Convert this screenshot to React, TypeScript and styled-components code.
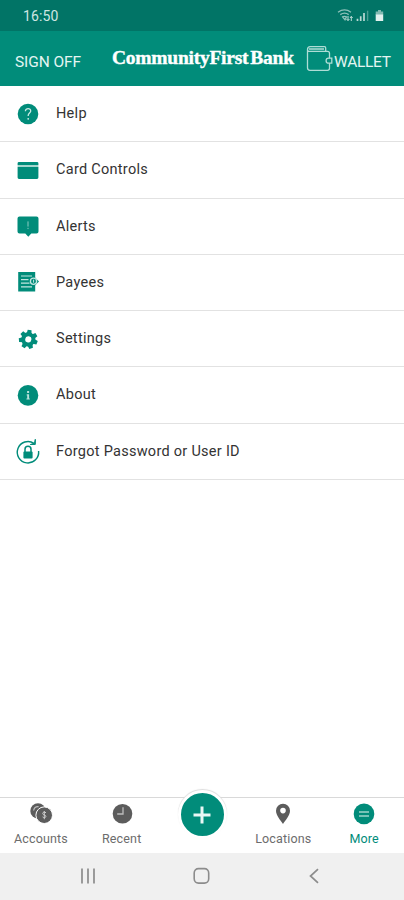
import React from "react";
import styled, { createGlobalStyle } from "styled-components";

const green = "#018c7a";

const GlobalStyle = createGlobalStyle`
  * { box-sizing: border-box; }
  body { margin: 0; background: #fff; font-family: Roboto, sans-serif; }
  svg { display: block; flex: none; overflow: visible; }
`;

const Screen = styled.div`
  width: 404px;
  height: 900px;
  display: flex;
  flex-direction: column;
  background: #fff;
  overflow: hidden;
`;

const StatusBar = styled.div`
  height: 31px;
  flex: none;
  display: flex;
  align-items: center;
  justify-content: space-between;
  padding: 1px 18px 0 23px;
  background: #017466;
  color: #cfe6e2;
  font-size: 14px;
  letter-spacing: 0.1px;
`;

const Header = styled.header`
  height: 55px;
  flex: none;
  display: grid;
  grid-template-columns: 112px 194px 1fr;
  align-items: center;
  background: ${green};
  color: #e4f5f2;
`;

const SignOff = styled.button`
  border: 0;
  background: none;
  padding: 6px 0 0 15px;
  color: inherit;
  font: 400 15.5px/20px Roboto, sans-serif;
  letter-spacing: -0.1px;
  text-align: left;
  white-space: nowrap;
`;

const Brand = styled.div`
  font: 700 19.5px/24px "Liberation Serif", serif;
  color: #fff;
  letter-spacing: -0.25px;
  word-spacing: -2.5px;
  padding-bottom: 2px;
  white-space: nowrap;
  -webkit-text-stroke: 0.4px #fff;
`;

const Wallet = styled.div`
  display: flex;
  align-items: center;
  font-size: 15.5px;
  line-height: 20px;
  letter-spacing: -0.3px;

  span { padding: 6px 0 0 1px; }
`;

const Menu = styled.ul`
  margin: 0;
  padding: 0;
  list-style: none;
  flex: 1;
`;

const MenuItem = styled.li`
  height: 56.25px;
  display: flex;
  align-items: center;
  gap: 16px;
  padding-left: 16px;
  border-bottom: 1px solid #e2e2e2;
  font-size: 14.5px;
  letter-spacing: 0.28px;
  color: #333;
`;

const TabBar = styled.nav`
  height: 56px;
  flex: none;
  display: grid;
  grid-template-columns: repeat(5, 1fr);
  border-top: 1px solid #d9d9d9;
  background: #fff;
`;

const Tab = styled.div<{ $active?: boolean }>`
  display: flex;
  flex-direction: column;
  align-items: center;
  padding: 4px 0 0 1px;
  gap: 4px;
  font-size: 12.5px;
  line-height: 17px;
  letter-spacing: 0.15px;
  color: ${(p) => (p.$active ? green : "#6c6c6c")};
`;

const AddButton = styled.button`
  width: 49px;
  height: 49px;
  margin: -8px 0 0 1px;
  justify-self: center;
  padding: 0;
  border: 3px solid #fff;
  border-radius: 50%;
  background: ${green};
  display: flex;
  align-items: center;
  justify-content: center;
  box-shadow: 0 -1px 1px #ddd;
`;

const SystemBar = styled.div`
  height: 47px;
  flex: none;
  display: flex;
  align-items: center;
  justify-content: space-between;
  padding: 0 80px 2px 77px;
  background: #f0f0f0;
`;

const Help = () => (
  <svg width="24" height="24" viewBox="0 0 24 24" fill="none">
    <circle cx="12" cy="12" r="10.3" fill={green} />
    <path d="M9.4 9.3c0-3.7 5.6-3.4 5.3-.2-.2 1.8-2.5 2.2-2.5 4.5v.5" stroke="#cceae5" strokeWidth="1.3" />
    <circle cx="12.2" cy="16.8" r=".9" fill="#cceae5" />
  </svg>
);

const Card = () => (
  <svg width="24" height="24" viewBox="0 0 24 24">
    <path d="M3 3.9h18a1.4 1.4 0 0 1 1.4 1.4v1.8H1.6V5.3A1.4 1.4 0 0 1 3 3.9ZM1.6 9h20.8v10.500a1.4 1.4 0 0 1-1.4 1.4H3A1.4 1.4 0 0 1 1.600 19.500Z" fill={green} />
    <path d="M1.6 7h20.8v2H1.6Z" fill="#a5d6ce" />
  </svg>
);

const Alert = () => (
  <svg width="24" height="24" viewBox="0 0 24 24">
    <path d="M3.5 2.6h17a2 2 0 0 1 2 2v13a2 2 0 0 1-2 2h-5.2L12.3 22.700l-3-3.100H3.500a2 2 0 0 1-2-2v-13a2 2 0 0 1 2-2Z" fill={green} />
    <path d="M12 7.4v5.2M12 13.8v1.3" stroke="#8ccbc2" strokeWidth="1" />
  </svg>
);

const Payees = () => (
  <svg width="24" height="24" viewBox="0 0 24 24" fill="none">
    <path d="M2.2 2h17v19.5h-17Z" fill={green} />
    <path d="M5 6h11M5 9.7h7.5M5 13.2h8.5M5 16.8h11" stroke="#c2e5e0" strokeWidth="1.2" />
    <path d="m18 6.4 5 5-5 5-4.5-5Z" fill={green} />
    <circle cx="17.5" cy="11.2" r="3.1" stroke="#c2e5e0" strokeWidth="1.3" />
    <path d="M17.6 9.7v3" stroke="#c2e5e0" />
  </svg>
);

const Settings = () => (
  <svg width="24" height="24" viewBox="0 0 24 24">
    <g transform="translate(12.3 12.4) rotate(8)" fill={green}>
      {[0, 51.43, 102.86, 154.29, 205.71, 257.14, 308.57].map((a) => (
        <path key={a} d="M-2.5-5.5-1.9-9.4h3.8l.6 3.9Z" transform={`rotate(${a})`} />
      ))}
      <circle r="5.1" fill="none" stroke={green} strokeWidth="4" />
    </g>
  </svg>
);

const About = () => (
  <svg width="24" height="24" viewBox="0 0 24 24">
    <circle cx="12" cy="12.4" r="10.3" fill={green} />
    <path d="M11.1 8h2v1.9h-2ZM10.7 11.3h2.4v4.2h.7v1.1h-3.4v-1.1h.8v-3.1h-.5Z" fill="#b8e0da" />
  </svg>
);

const Password = () => (
  <svg width="24" height="24" viewBox="0 0 24 24" fill="none">
    <path d="M18 4.400A10.700 10.700 0 1 0 22.600 12" stroke={green} strokeWidth="1.4" />
    <path d="m14.300 5.500 5-.100V.300l-.800 4Z" fill={green} stroke={green} strokeWidth="1" />
    <path d="M9 13V10.200a3 3 0 0 1 6 0V13" stroke={green} strokeWidth="1.500" />
    <rect x="7.4" y="12.400" width="9.2" height="7" rx="1" fill={green} />
  </svg>
);

const items = [
  { label: "Help", icon: <Help /> },
  { label: "Card Controls", icon: <Card /> },
  { label: "Alerts", icon: <Alert /> },
  { label: "Payees", icon: <Payees /> },
  { label: "Settings", icon: <Settings /> },
  { label: "About", icon: <About /> },
  { label: "Forgot Password or User ID", icon: <Password /> },
];

const StatusIcons = () => (
  <svg width="49" height="14" viewBox="0 0 49 14" fill="none">
    <path d="M1 3.2c4-2.8 9-2.8 13 0M3.3 5.6c2.7-1.8 5.8-1.8 8.4 0M5.6 7.9c1.3-.8 2.5-.8 3.8 0L8 10.8Z" stroke="#8fc1ba" strokeWidth="1.3" />
    <path d="M11 7v4.5m-1.5-1.5 1.5 1.6 1.4-1.6M14.3 12V7.4M13 9l1.3-1.6L15.6 9" stroke="#bcdcd7" strokeWidth="1" />
    <path d="M20.5 12V9.7M23.7 12V7.3M27 12V4" stroke="#b9d9d4" strokeWidth="1.7" />
    <path d="M30.6 12V1.7" stroke="#4d9f94" strokeWidth="1.4" />
    <path d="M41 1h3v1.4h2.2V6h-7.5V2.4H41Z" fill="#82bab2" />
    <path d="M38.7 5.5h7.5V12h-7.5Z" fill="#e2f1ee" />
  </svg>
);

const WalletIcon = () => (
  <svg width="27" height="28" viewBox="0 0 27 28" fill="none" stroke="#afddd6" strokeWidth="1.3">
    <path d="M1.5 4.7v18.1a2.5 2.5 0 0 0 2.500 2.500h17.500a2 2 0 0 0 2-2v-5.2M23.5 13.2V8.3a2 2 0 0 0-2-2H3a1.6 1.6 0 0 1-1.5-1.6C1.5 3 2.8 1.7 4.3 1.7h14.2a1.2 1.2 0 0 1 1.2 1.2v3.4M3 4h15" />
    <path d="M25.8 13.2h-3.2a2.5 2.5 0 0 0 0 5h3.2Z" />
  </svg>
);

export default function App() {
  return (
    <Screen>
      <GlobalStyle />
      <StatusBar>
        <span>16:50</span>
        <StatusIcons />
      </StatusBar>
      <Header>
        <SignOff>SIGN OFF</SignOff>
        <Brand>CommunityFirst Bank</Brand>
        <Wallet>
          <WalletIcon />
          <span>WALLET</span>
        </Wallet>
      </Header>
      <Menu>
        {items.map((item) => (
          <MenuItem key={item.label}>
            {item.icon}
            <span>{item.label}</span>
          </MenuItem>
        ))}
      </Menu>
      <TabBar>
        <Tab>
          <svg width="24" height="24" viewBox="0 0 24 24" fill="none">
            <circle cx="9" cy="8.9" r="7.7" fill="#5c5c5c" />
            <path d="M4.6 8.5c.5-2.6 2.6-4 5-3.8" stroke="#bbb" strokeWidth="1.2" />
            <circle cx="15.2" cy="13.2" r="8.3" fill="#5c5c5c" stroke="#fff" strokeWidth="1" />
            <path d="M17 10.8c-1.2-1.2-3.4-.8-3.3.8.2 1.7 3.2 1 3.2 2.8 0 1.4-2.2 1.7-3.3.5M15.3 9v8.2" stroke="#ccc" strokeWidth="1" />
          </svg>
          Accounts
        </Tab>
        <Tab>
          <svg width="24" height="24" viewBox="0 0 24 24" fill="none">
            <circle cx="12.5" cy="11.7" r="9.8" fill="#5c5c5c" />
            <path d="M13 5.2v6.8H7.2" stroke="#bdbdbd" strokeWidth="1.3" />
          </svg>
          Recent
        </Tab>
        <AddButton aria-label="Add">
          <svg width="20" height="20" viewBox="0 0 20 20">
            <path d="M10 1.5v17M1.5 10h17" stroke="#e9f7f5" strokeWidth="3" />
          </svg>
        </AddButton>
        <Tab>
          <svg width="24" height="24" viewBox="0 0 24 24">
            <path fillRule="evenodd" d="M12 1.7a7 7 0 0 1 7 7c0 4.3-4.6 9.7-7 13.3C9.6 18.4 5 13 5 8.7a7 7 0 0 1 7-7Zm0 4.1a2.800 2.800 0 1 0 0 5.600 2.800 2.800 0 0 0 0-5.600Z" fill="#5c5c5c" />
          </svg>
          Locations
        </Tab>
        <Tab $active>
          <svg width="24" height="24" viewBox="0 0 24 24">
            <circle cx="12" cy="11.9" r="10.3" fill={green} />
            <path d="M7 10h10M7 14h10" stroke="#9dd4cc" strokeWidth="1.4" />
          </svg>
          More
        </Tab>
      </TabBar>
      <SystemBar>
        <svg width="22" height="20" viewBox="0 0 22 20">
          <path d="M5 2.5v15M11 2.5v15M17 2.5v15" stroke="#8c8c8c" strokeWidth="1.7" />
        </svg>
        <svg width="20" height="20" viewBox="0 0 20 20" fill="none">
          <rect x="2.2" y="2.6" width="14.5" height="14.5" rx="4.3" stroke="#8c8c8c" strokeWidth="1.6" />
        </svg>
        <svg width="20" height="20" viewBox="0 0 20 20" fill="none">
          <path d="m14 3.2-7.5 6.8 7.5 6.8" stroke="#8c8c8c" strokeWidth="1.7" />
        </svg>
      </SystemBar>
    </Screen>
  );
}
